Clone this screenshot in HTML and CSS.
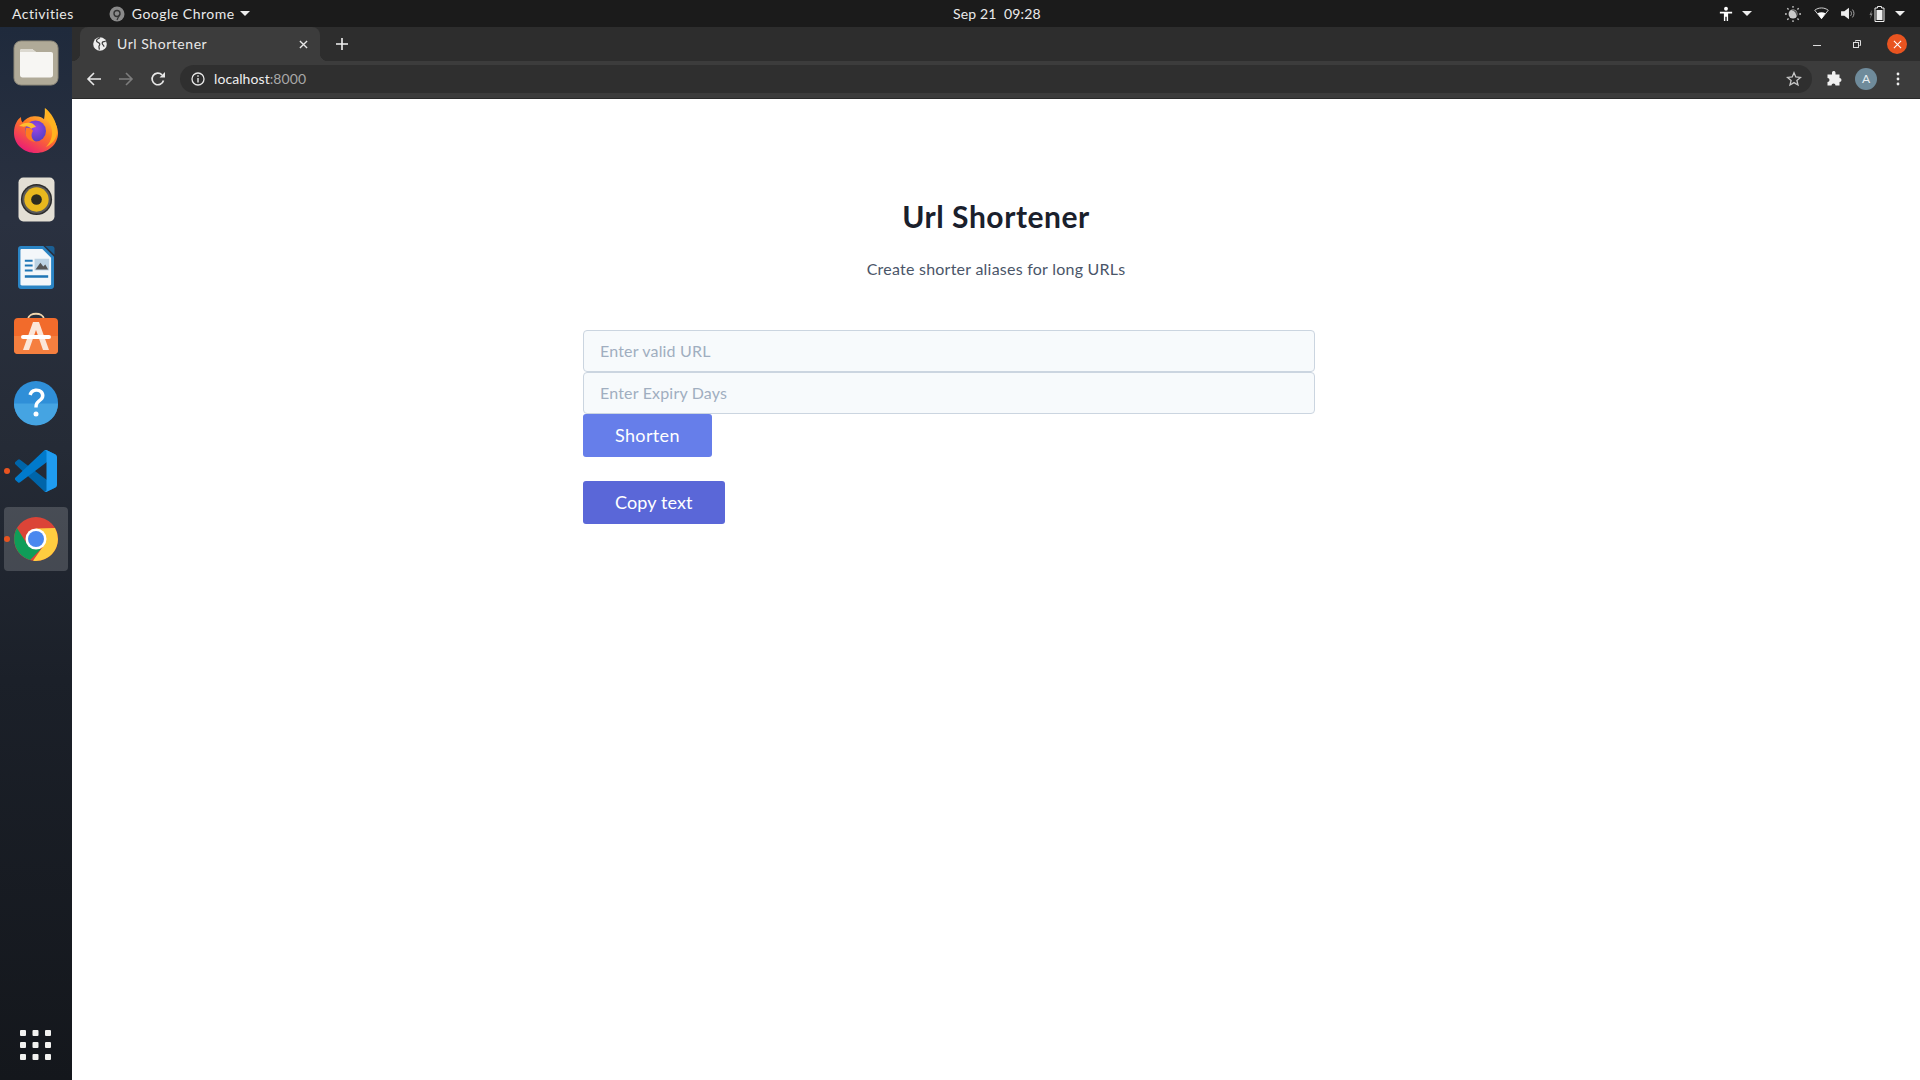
FILE: index.html
```html
<!DOCTYPE html>
<html lang="en">
<head>
<meta charset="utf-8">
<title>Url Shortener</title>
<link rel="stylesheet" href="styles.css">
</head>
<body>
<header class="topbar">
  <div class="top-left">
    <span class="activities">Activities</span>
    <span class="app-menu">
      <svg class="app-ico" viewBox="0 0 16 16"><circle cx="8" cy="8" r="7.5" fill="#8a8a8a"/><circle cx="8" cy="7.5" r="3" fill="none" stroke="#333" stroke-width="1.4"/><path d="M10.8 8 8 14" stroke="#333" stroke-width="1.2"/></svg>
      Google Chrome
      <i class="caret app-caret"></i>
    </span>
  </div>
  <div class="clock">Sep 21&nbsp; 09:28</div>
  <div class="tray">
    <svg class="tray-ico access" viewBox="0 0 16 18"><circle cx="8" cy="3" r="2.2" fill="#fff"/><path d="M1 6.5h14v1.8h-4.6V17H8.8v-5H7.2v5H5.6V8.3H1z" fill="#fff"/></svg>
    <i class="caret tray-caret"></i>
    <svg class="tray-ico night" viewBox="0 0 18 18"><circle cx="9" cy="9" r="5" fill="#c9c9c9"/><path d="M9 4.4a4.6 4.6 0 0 1 4.6 4.6 4.6 4.6 0 0 1-1 2.9A6 6 0 0 0 7 4.9a4.6 4.6 0 0 1 2-.5z" fill="#555"/><path d="M9 0v2M9 16v2M0 9h2M16 9h2M2.6 2.6 4 4M14 14l1.4 1.4M2.6 15.4 4 14M14 4l1.4-1.4" stroke="#c9c9c9" stroke-width="1.5"/></svg>
    <svg class="tray-ico wifi" viewBox="0 0 16 14"><path d="M.7 3.5C5 .2 11 .2 15.3 3.5L8 12.6z" fill="none" stroke="#ddd" stroke-width="1"/><path d="M3.7 6.8C6 5.3 10 5.3 12.3 6.8L8 12.8z" fill="#fff"/></svg>
    <svg class="tray-ico vol" viewBox="0 0 16 14"><path d="M0 4.5h3.5L8.5.8v12.4L3.5 9.5H0z" fill="#eee"/><path d="M10.3 4.500c1.200 1.400 1.200 3.600 0 5M12.300 2.800c2.100 2.300 2.100 6.100 0 8.400" fill="none" stroke="#b0b0b0" stroke-width="1"/></svg>
    <svg class="tray-ico batt" viewBox="0 0 16 16"><path d="M2.800 4 .5 9h1.500l-1 4 2.600-5.500H2.200z" fill="#888"/><path d="M8.500.5h4v1.500h2.500v13.500H6V2h2.500z" fill="none" stroke="#eee" stroke-width="1"/><rect x="7.500" y="4" width="6" height="10" fill="#eee"/></svg>
    <i class="caret tray-caret last"></i>
  </div>
</header>

<div class="desktop">
  <nav class="dock">
    <div class="dock-item">
      <svg class="dock-ico" viewBox="0 0 46 46"><rect x="1" y="1" width="44" height="44" rx="7" fill="#b0aa98"/><rect x="1" y="1" width="44" height="44" rx="7" fill="none" stroke="#8f8a7b"/><path d="M7 11c0-1.200.8-2 2-2h10l4 3h15c1.200 0 2 .8 2 2v21c0 1.500-1 2.500-2.500 2.500h-28C8 37.500 7 36.500 7 35z" fill="#f7f6f3"/><path d="M7 11c0-1.200.8-2 2-2h10l4 3H7z" fill="#dcd9d0"/></svg>
    </div>
    <div class="dock-item">
      <svg class="dock-ico firefox" viewBox="0 0 46 46">
        <defs>
          <linearGradient id="ff" x1="0.8" y1="0" x2="0.2" y2="1"><stop offset="0" stop-color="#ffd23a"/><stop offset=".45" stop-color="#ff7a22"/><stop offset="1" stop-color="#e8137f"/></linearGradient>
          <radialGradient id="ffc" cx=".5" cy=".35" r=".7"><stop offset="0" stop-color="#9a45e6"/><stop offset="1" stop-color="#4f3fc0"/></radialGradient>
        </defs>
        <path d="M1 26C1 17 5 12 8 10c0 2.500.3 4 1.500 5.500 2.500-3.500 6.500-6 11.500-6.300 5-.3 8 1 10 3 .8-3.500 1-7 .8-11 4.500 3.500 6 7 6.500 10C42 14.500 45 20 45 26c0 11.500-10 20-22 20S1 37.500 1 26z" fill="url(#ff)"/>
        <path d="M32 1c6 5 12 13 12 23 0 8-5 13-11 16 6-6 8-15 4-23-1.500-2.500-3.500-3.500-4.500-5.500.5-3 .5-7-.5-10.500z" fill="#ffb21f"/>
        <circle cx="22.500" cy="24" r="10.500" fill="url(#ffc)"/>
        <path d="M6 19c3-3 8-4 12-3 3 .8 4 3 5 4-2 0-4 1-5 2-1-2-4-3-6-2.500C10 20 8 19 6 19z" fill="#ffbe2e"/>
        <path d="M13 21c3-1 6 1 7 3-3 4-1 9 3 11-6 0-13-5-10-14z" fill="#ff7a22"/>
      </svg>
    </div>
    <div class="dock-item">
      <svg class="dock-ico tall" viewBox="0 0 38 46"><rect x=".5" y=".5" width="37" height="45" rx="5" fill="#e3dfd4"/><circle cx="19" cy="23" r="16" fill="#2c2c2c"/><circle cx="19" cy="23" r="14.500" fill="#5a5a5a"/><circle cx="19" cy="23" r="12.500" fill="#e8b81e"/><circle cx="19" cy="23" r="5.500" fill="#2b2b20"/></svg>
    </div>
    <div class="dock-item">
      <svg class="dock-ico tall" viewBox="0 0 38 46"><path d="M3 1h23l11 11v30c0 1.800-1.200 3-3 3H3c-1.800 0-3-1.200-3-3V4c0-1.800 1.200-3 3-3z" fill="#2a84c4"/><path d="M4 4h21l9 9v27c0 1-.5 1.500-1.500 1.500h-28.500c-1 0-1.500-.5-1.500-1.500V5.500C2.500 4.500 3 4 4 4z" fill="#f3f7fa"/><path d="M28 1h7c1.200 0 2.500 1.300 2.500 2.500V10z" fill="#1b5f93"/><path d="M7 15h8v2H7zm0 5h8v2H7zm0 5h8v2H7zM7 31h24v2.500H7z" fill="#1f76b5"/><rect x="17" y="14" width="15" height="12" fill="#bcd3e4"/><path d="M18 25l5-7 3 4 2-2 3 5z" fill="#555"/></svg>
    </div>
    <div class="dock-item">
      <svg class="dock-ico" viewBox="0 0 46 46"><path d="M15 7c1-7 15-7 16 0" fill="none" stroke="#f1d6ae" stroke-width="1.800"/><rect x="1" y="6" width="44" height="36" rx="4" fill="#f26b2b"/><path d="M1 24h44v14a4 4 0 0 1-4 4H5a4 4 0 0 1-4-4z" fill="#f57f3f"/><path d="M20 10h6l10 28h-6l-7-20-7 20h-6z" fill="#fbe6d8"/><rect x="8" y="23" width="30" height="4" rx="2" fill="#fff"/></svg>
    </div>
    <div class="dock-item">
      <svg class="dock-ico" viewBox="0 0 46 46"><circle cx="23" cy="23" r="22" fill="#2f8fd8"/><path d="M1 23.500h44A22 22 0 0 1 1 23.500z" fill="#45a4e2"/><path d="M15.500 14.500c1-4 4.200-6 8-6 4.700 0 8 2.900 8 7 0 3-1.700 4.700-3.800 6.300-2.100 1.600-3 2.700-3 5.700h-3.400c0-4 1.300-5.800 3.600-7.700 1.900-1.500 3-2.500 3-4.300 0-2.200-1.800-3.800-4.400-3.800-2.400 0-4 1.200-4.700 3.800z" fill="#fff"/><circle cx="23" cy="34" r="2.500" fill="#fff"/></svg>
    </div>
    <div class="dock-item">
      <i class="run-dot"></i>
      <svg class="dock-ico code" viewBox="0 0 100 100"><path d="M96.460 89.200 75.860 99.100a6.230 6.230 0 0 1-7.100-1.200L1.340 34.400a4.160 4.160 0 0 1 0-6.160l5.500-5a4.160 4.160 0 0 1 5.320-.24L93.400 84.600c2.720 2.070 6.600.13 6.600-3.290v.24c0 2.400-1.380 4.590-3.540 5.630z" fill="#0065a9"/><path d="M96.460 10.800 75.860.87a6.230 6.230 0 0 0-7.100 1.200L1.340 65.600a4.160 4.160 0 0 0 0 6.160l5.500 5a4.160 4.160 0 0 0 5.320.24L93.400 15.400c2.720-2.070 6.600-.13 6.600 3.290v-.24c0-2.400-1.380-4.590-3.540-5.630z" fill="#007acc"/><path d="M75.860 99.130a6.230 6.230 0 0 1-7.110-1.200c2.300 2.300 6.250.67 6.250-2.580V4.650c0-3.250-3.940-4.880-6.250-2.580a6.230 6.230 0 0 1 7.100-1.200l20.600 9.900A6.250 6.250 0 0 1 100 16.400v67.200a6.250 6.250 0 0 1-3.540 5.630z" fill="#1f9cf0"/></svg>
    </div>
    <div class="dock-item active">
      <i class="run-dot"></i>
      <svg class="dock-ico" viewBox="0 0 46 46"><circle cx="23" cy="23" r="22" fill="#db4437"/><path d="M4 12 14 28l14 5-11 11A22 22 0 0 1 4 12z" fill="#0f9d58"/><path d="M42 12A22 22 0 0 1 20 44.800L31 29 23 12.500z" fill="#ffcd40"/><circle cx="23" cy="23" r="10.500" fill="#fff"/><circle cx="23" cy="23" r="8" fill="#4a88ef"/></svg>
    </div>
    <div class="dock-apps">
      <svg class="apps-ico" viewBox="0 0 32 32"><g fill="#f2f2f0"><rect x="0" y="0" width="6" height="6" rx="1"/><rect x="12.500" y="0" width="6" height="6" rx="1"/><rect x="25" y="0" width="6" height="6" rx="1"/><rect x="0" y="12" width="6" height="6" rx="1"/><rect x="12.500" y="12" width="6" height="6" rx="1"/><rect x="25" y="12" width="6" height="6" rx="1"/><rect x="0" y="24" width="6" height="6" rx="1"/><rect x="12.500" y="24" width="6" height="6" rx="1"/><rect x="25" y="24" width="6" height="6" rx="1"/></g></svg>
    </div>
  </nav>

  <div class="window">
    <div class="tabstrip">
      <div class="tab">
        <svg class="tab-ico" viewBox="0 0 16 16"><circle cx="8" cy="8" r="7.800" fill="#eee"/><path d="M8 .5c-1 1.500-3.500 1-4 3.500-.3 1.500 1.500 2 3 3 1 .7 1 2 0 3-.6.8 0 2 .3 4.500M14.500 5c-2 0-4 0-4 2s2 2 2 4" fill="none" stroke="#3c3c3c" stroke-width="1.400"/></svg>
        <span class="tab-title">Url Shortener</span>
        <svg class="tab-close" viewBox="0 0 10 10"><path d="M1 1l8 8M9 1 1 9" stroke="#e8e8e8" stroke-width="1.500"/></svg>
      </div>
      <svg class="new-tab" viewBox="0 0 12 12"><path d="M6 0v12M0 6h12" stroke="#f1f1f1" stroke-width="1.600"/></svg>
      <div class="win-btns">
        <i class="win-min"></i>
        <svg class="win-max" viewBox="0 0 8 8"><path d="M2.500 1.500V.5h5v5h-1" fill="none" stroke="#ddd"/><rect x=".5" y="2.500" width="5" height="5" fill="none" stroke="#ddd"/></svg>
        <span class="win-close"><svg viewBox="0 0 10 10"><path d="M1 1l8 8M9 1 1 9" stroke="#fff" stroke-width="1.200"/></svg></span>
      </div>
    </div>
    <div class="toolbar">
      <svg class="nav-ico" viewBox="0 0 16 16"><path d="M15 8H2M8 2 2 8l6 6" fill="none" stroke="#e8e8e8" stroke-width="1.600"/></svg>
      <svg class="nav-ico" viewBox="0 0 16 16"><path d="M1 8h13M8 2l6 6-6 6" fill="none" stroke="#7d7d7d" stroke-width="1.600"/></svg>
      <svg class="nav-ico" viewBox="0 0 16 16"><path d="M13.500 9.500A5.800 5.800 0 1 1 12 3.800" fill="none" stroke="#e8e8e8" stroke-width="1.700"/><path d="M9.500 6.500H15V1z" fill="#e8e8e8"/></svg>
      <div class="omnibox">
        <svg class="info-ico" viewBox="0 0 14 14"><circle cx="7" cy="7" r="6" fill="none" stroke="#e8e8e8" stroke-width="1.300"/><path d="M6.300 6h1.400v4.500H6.300zM6.300 3.300h1.400v1.500H6.300z" fill="#e8e8e8"/></svg>
        <span class="url">localhost<span class="port">:8000</span></span>
        <svg class="star" viewBox="0 0 16 16"><path d="M8 1.700 9.800 6l4.700.4-3.600 3 1.100 4.600L8 11.600 4 14l1.100-4.600-3.600-3L6.200 6z" fill="none" stroke="#c8c8c8" stroke-width="1.300"/></svg>
      </div>
      <svg class="ext" viewBox="0 0 16 16"><path d="M6 1.500a1.800 1.800 0 0 1 3.500 0V3.500h4v3.500a2 2 0 1 1 0 4v3.500H9.500a2 2 0 1 0-4 0H1.500V11a2 2 0 1 0 0-4V3.500H6z" fill="#f1f1f1"/></svg>
      <span class="avatar">A</span>
      <svg class="dots" viewBox="0 0 4 14"><circle cx="2" cy="2" r="1.400" fill="#eee"/><circle cx="2" cy="7" r="1.400" fill="#eee"/><circle cx="2" cy="12" r="1.400" fill="#eee"/></svg>
    </div>
    <main class="page">
      <h1 class="title">Url Shortener</h1>
      <p class="subtitle">Create shorter aliases for long URLs</p>
      <form class="form">
        <input class="field" type="text" placeholder="Enter valid URL">
        <input class="field" type="text" placeholder="Enter Expiry Days">
        <button class="btn btn-shorten" type="button">Shorten</button>
      </form>
      <button class="btn btn-copy" type="button">Copy text</button>
    </main>
  </div>
</div>
</body>
</html>
```
FILE: styles.css
```css
* { box-sizing: border-box; }
html, body { margin: 0; height: 100%; }
body {
  width: 1920px; height: 1080px; overflow: hidden;
  display: flex; flex-direction: column;
  font-family: "Noto Sans", "Liberation Sans", sans-serif;
  background: #fff;
}
.topbar {
  height: 27px; flex: none; background: #1b1b1b; color: #eaeaea;
  position: relative;
  display: flex; align-items: center; justify-content: space-between;
  font-size: 14px; font-family: Lato, sans-serif; letter-spacing: .5px;
}
.top-left { display: flex; align-items: center; }
.activities { margin-left: 12px; }
.app-menu { margin-left: 35px; display: flex; align-items: center; gap: 7px; }
.app-ico { width: 16px; height: 16px; }
.caret { display: block; width: 0; height: 0; border: 5px solid transparent; border-top: 5px solid #eee; border-bottom: 0; }
.app-caret { margin-left: -2px; }
.clock { position: absolute; left: 953px; top: 5px; line-height: 17px; letter-spacing: .15px; }
.tray { display: flex; align-items: center; padding-right: 15px; }
.tray-ico { display: block; }
.access { width: 14px; height: 16px; margin-right: 9px; }
.night { width: 16px; height: 16px; margin-left: 33px; }
.wifi { width: 15px; height: 13px; margin-left: 13px; }
.vol { width: 15px; height: 13px; margin-left: 12px; }
.batt { width: 16px; height: 16px; margin-left: 13px; }
.last { margin-left: 10px; }

.desktop { flex: 1; display: flex; min-height: 0; }
.dock {
  width: 72px; flex: none; position: relative;
  display: flex; flex-direction: column; align-items: center;
  padding-top: 2px;
  background: linear-gradient(180deg, #1f2a3c 0%, #2a3140 18%, #252b36 40%, #1b2029 62%, #14171c 100%);
}
.dock-item { width: 72px; height: 68px; flex: none; position: relative; display: flex; align-items: center; justify-content: center; }
.dock-item.active::before {
  content: ""; position: absolute; left: 4px; top: 2px; width: 64px; height: 64px;
  border-radius: 4px; background: rgba(255,255,255,.17);
}
.dock-ico { width: 46px; height: 46px; position: relative; }
.firefox { margin-top: -2px; }
.tall { width: 37px; height: 45px; }
.code { width: 42px; height: 42px; }
.run-dot { position: absolute; left: 4px; top: 31px; width: 6px; height: 6px; border-radius: 50%; background: #e95420; z-index: 1; }
.dock-apps { margin-top: auto; height: 68px; display: flex; align-items: center; justify-content: center; }
.apps-ico { width: 32px; height: 32px; }

.window { flex: 1; min-width: 0; display: flex; flex-direction: column; }
.tabstrip { height: 34px; flex: none; background: #2d2d2d; display: flex; align-items: center; padding-left: 8px; }
.tab { position: relative; width: 240px; height: 34px; background: #3c3c3c; border-radius: 8px 8px 0 0; display: flex; align-items: center; color: #e8e8e8; font: 14px Lato, sans-serif; letter-spacing: .55px; }
.tab::before, .tab::after { content: ""; position: absolute; bottom: 0; width: 8px; height: 8px; }
.tab::before { left: -8px; background: radial-gradient(circle at 0 0, transparent 8px, #3c3c3c 8.5px); }
.tab::after { right: -8px; background: radial-gradient(circle at 100% 0, transparent 8px, #3c3c3c 8.5px); }
.tab-ico { width: 14px; height: 14px; margin-left: 13px; }
.tab-title { margin-left: 10px; flex: 1; padding-bottom: 2px; }
.tab-close { width: 9px; height: 9px; margin-right: 12px; }
.new-tab { width: 12px; height: 12px; margin-left: 16px; }
.win-btns { margin-left: auto; display: flex; align-items: center; }
.win-min { display: block; width: 8px; height: 1px; background: #ddd; margin-top: 3px; }
.win-max { width: 8px; height: 8px; margin-left: 32px; }
.win-close { width: 20px; height: 20px; border-radius: 50%; background: #e95420; margin-left: 26px; margin-right: 13px; display: flex; align-items: center; justify-content: center; }
.win-close svg { width: 9px; height: 9px; }
.toolbar { height: 38px; flex: none; background: #3c3c3c; border-bottom: 1px solid #2a2a2a; display: flex; align-items: center; padding: 0 0 1px 14px; }
.nav-ico { width: 16px; height: 16px; margin-right: 16px; }
.nav-ico:nth-child(3) { margin-right: 14px; }
.omnibox { width: 1632px; height: 28px; border-radius: 14px; background: #2f2f2f; display: flex; align-items: center; padding: 0 10px 0 11px; color: #eee; font: 14px Lato, sans-serif; letter-spacing: .08px; }
.info-ico { width: 14px; height: 14px; }
.url { margin-left: 9px; flex: 1; padding-bottom: 1px; }
.port { color: #a8a8a8; }
.star { width: 16px; height: 16px; }
.ext { width: 16px; height: 16px; margin-left: 14px; }
.avatar { width: 22px; height: 22px; border-radius: 50%; background: #6f8b9b; color: #e8eef2; font: 12px/22px Lato, sans-serif; text-align: center; margin-left: 13px; }
.dots { width: 4px; height: 14px; margin-left: 19px; }

.page { flex: 1; background: #fff; padding-top: 95px; }
.title { margin: 0; text-align: center; font: 700 30px/45px Lato, sans-serif; letter-spacing: .55px; color: #1a202c; }
.subtitle { margin: 18px 0 0; text-align: center; font: 400 16px/24px Lato, sans-serif; letter-spacing: .24px; color: #4a5568; }
.form { width: 732px; margin: 49px 0 0 511px; display: flex; flex-direction: column; align-items: flex-start; }
.field {
  display: block; width: 732px; height: 42px; padding: 0 16px 2px; margin: 0;
  background: #f7fafc; border: 1px solid #cbd5e0; border-radius: 4px;
  font: 16px Lato, sans-serif; letter-spacing: .18px; color: #4a5568; outline: none;
}
.field::placeholder { color: #a0aec0; opacity: 1; }
.btn { display: block; height: 43px; border: 0; border-radius: 3px; color: #fff; font: 18px Lato, sans-serif; padding: 0 32px 2px; }
.btn-shorten { background: #667eea; letter-spacing: .35px; }
.btn-copy { background: #5a67d8; margin: 24px 0 0 511px; letter-spacing: .12px; }
```
